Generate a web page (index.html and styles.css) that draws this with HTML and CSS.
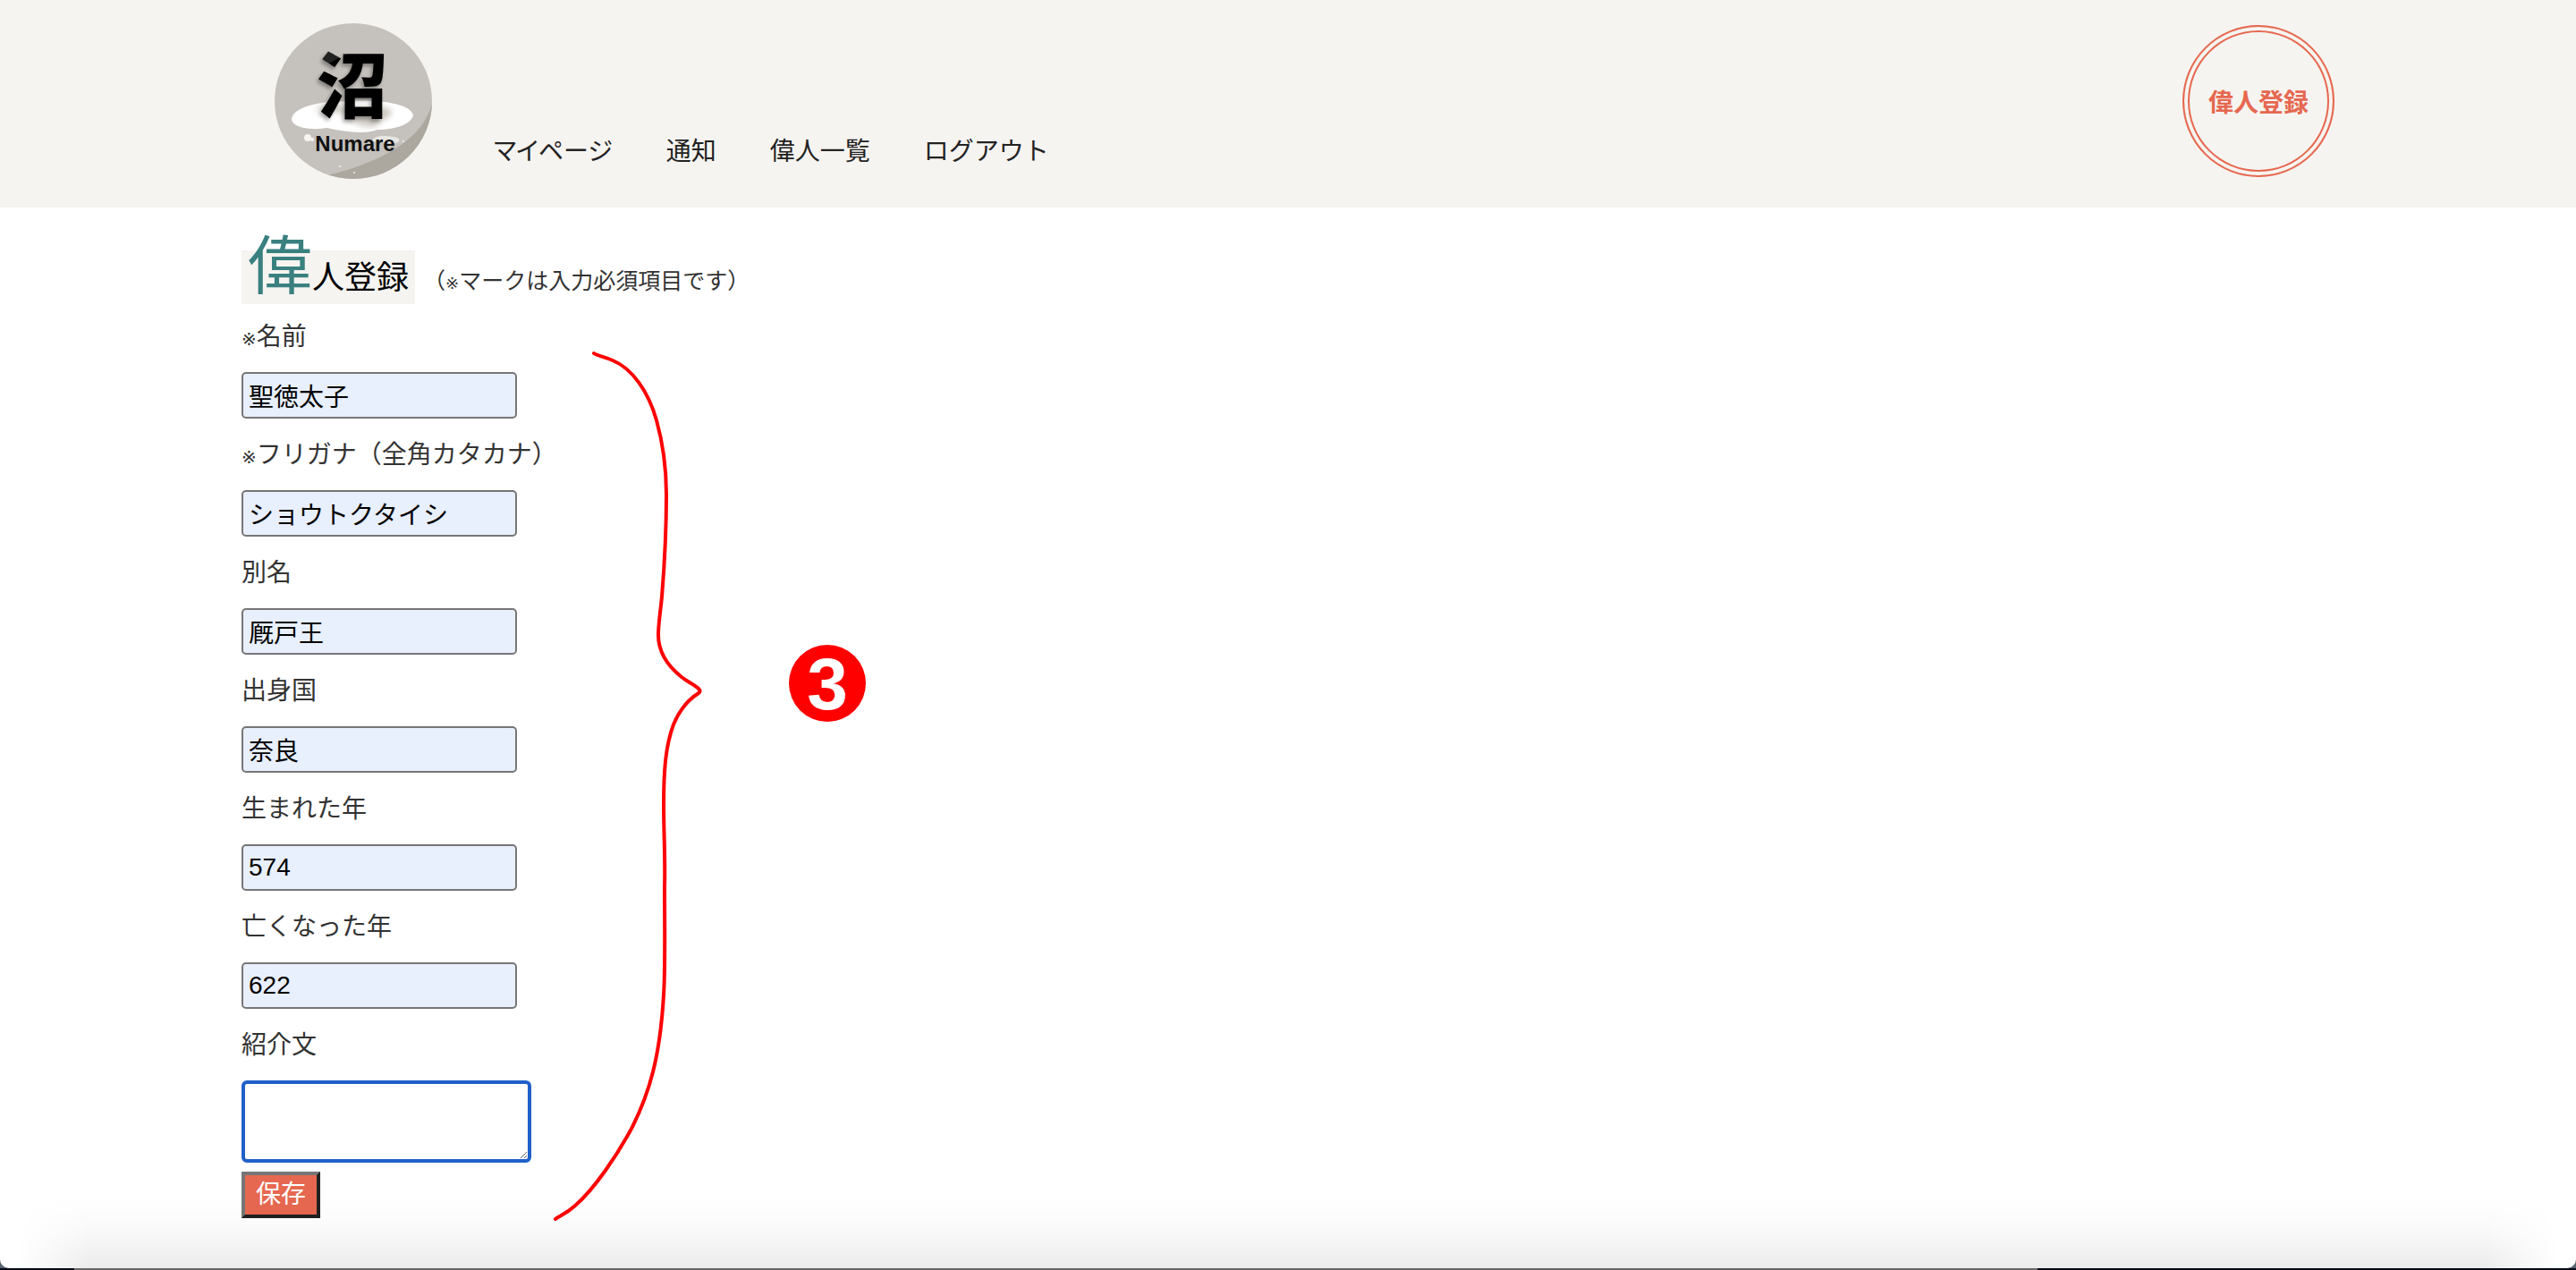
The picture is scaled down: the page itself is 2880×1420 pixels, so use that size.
FILE: index.html
```html
<!DOCTYPE html>
<html lang="ja">
<head>
<meta charset="utf-8">
<title>偉人登録 | Numare</title>
<link rel="stylesheet" href="styles.css">
</head>
<body>
<div class="window">
  <header class="header">
    <div class="container header-inner">
      <a class="logo" href="#" aria-label="Numare">
        <svg viewBox="0 0 178 176" width="178" height="176">
          <defs>
            <clipPath id="disc"><ellipse cx="89" cy="87" rx="88" ry="87"/></clipPath>
            <filter id="shade" x="-20%" y="-20%" width="140%" height="140%"><feDropShadow dx="-2" dy="3" stdDeviation="2" flood-color="#000" flood-opacity="0.35"/></filter>
            <filter id="soft"><feGaussianBlur stdDeviation="3"/></filter>
            <linearGradient id="ink" x1="0" y1="0" x2="0.35" y2="1"><stop offset="0.34" stop-color="#222"/><stop offset="0.36" stop-color="#000"/></linearGradient>
          </defs>
          <g clip-path="url(#disc)">
            <rect width="178" height="176" fill="#c5c1bc"/>
            <path d="M178 86C170 124 132 152 60 170L60 176H178Z" fill="#aca79f"/>
            <path d="M20 108C20 96 44 88 70 88C102 84 154 87 156 103C154 112 138 119 116 119C104 124 80 122 60 117C42 120 22 117 20 108Z" fill="#fff"/>
            <path d="M46 100C60 92 76 99 84 108C98 116 116 120 118 110C138 104 134 92 118 94L52 92Z" fill="#cfcac2" filter="url(#soft)"/>
            <path d="M110 132C112 124 126 126 134 127C144 128 142 135 132 134Z" fill="#e8e6e1"/>
            <circle cx="38" cy="128" r="4" fill="#f6f4f0"/>
            <circle cx="43" cy="130" r="2" fill="#f6f4f0"/>
            <circle cx="74" cy="160" r="1" fill="#f6f4f0"/>
            <circle cx="90" cy="167" r="1" fill="#f6f4f0"/>
            <circle cx="145" cy="132" r="1" fill="#f6f4f0"/>
          </g>
          <text class="logo-kanji" x="88" y="99" text-anchor="middle" fill="url(#ink)" filter="url(#shade)">沼</text>
          <text class="logo-name" x="91" y="143" text-anchor="middle">Numare</text>
        </svg>
      </a>
      <nav class="nav">
        <a href="#">マイページ</a>
        <a href="#">通知</a>
        <a href="#">偉人一覧</a>
        <a href="#">ログアウト</a>
      </nav>
      <a class="register" href="#">偉人登録</a>
    </div>
  </header>

  <main class="container main">
    <div class="title-row">
      <h1 class="title"><span class="title-initial">偉</span>人登録</h1>
      <p class="note">（<span class="mark">※</span>マークは入力必須項目です）</p>
    </div>
    <form class="form">
      <div class="field">
        <label for="name"><span class="mark">※</span>名前</label>
        <input id="name" type="text" value="聖徳太子">
      </div>
      <div class="field">
        <label for="kana"><span class="mark">※</span>フリガナ（全角カタカナ）</label>
        <input id="kana" type="text" value="ショウトクタイシ">
      </div>
      <div class="field">
        <label for="alias">別名</label>
        <input id="alias" type="text" value="厩戸王">
      </div>
      <div class="field">
        <label for="country">出身国</label>
        <input id="country" type="text" value="奈良">
      </div>
      <div class="field">
        <label for="born">生まれた年</label>
        <input id="born" type="text" value="574">
      </div>
      <div class="field">
        <label for="died">亡くなった年</label>
        <input id="died" type="text" value="622">
      </div>
      <div class="field">
        <label for="intro">紹介文</label>
        <textarea id="intro"></textarea>
      </div>
      <button class="save" type="submit">保存</button>
    </form>

    <svg class="callout" viewBox="0 0 360 980" width="360" height="980">
      <path d="M54 3C58 6 66 7 75 11C97 20 115 46 124 78C131 103 135 128 135 161C135 200 133 238 130 275C128 295 126 306 126 318C126 342 142 357 152 365C160 371 167 374 171 378Q174 381 171 383C160 390 150 401 143 418C134 442 132 470 132 508C132 540 134 570 133 600C133 640 134 690 132 720C128 790 116 830 97 868C80 900 54 938 33 956C22 966 16 967 11 971" fill="none" stroke="#f00" stroke-width="4" stroke-linecap="round" stroke-linejoin="round"/>
      <circle cx="315" cy="372" r="43" fill="#f00"/>
      <text class="callout-number" x="315" y="401" text-anchor="middle">3</text>
    </svg>
  </main>
  <div class="window-shade"></div>
</div>
<div class="desktop-edge"></div>
</body>
</html>
```
FILE: styles.css
```css
* {
  box-sizing: border-box;
}

body {
  display: flex;
  flex-direction: column;
  min-height: 100vh;
  margin: 0;
  background: #5b6470;
  color: #333;
  font-family: "Liberation Sans", "Noto Sans CJK JP", sans-serif;
  font-size: 28px;
  line-height: 40px;
}

.window {
  position: relative;
  flex: 1;
  overflow: hidden;
  border-radius: 0 0 10px 10px;
  background: #fff;
}

.container {
  width: 100%;
  max-width: 2340px;
  margin: 0 auto;
}

.header {
  background: #f6f4f0;
}

.header-inner {
  display: flex;
  align-items: flex-start;
  padding: 26px 0 30px 36px;
}

.logo {
  display: flex;
}

.logo-kanji {
  font: 900 80px "Noto Sans CJK JP", sans-serif;
}

.logo-name {
  fill: #111;
  font: bold 24px "Liberation Sans", sans-serif;
}

.nav {
  display: flex;
  align-self: flex-end;
  gap: 60px;
  margin: 0 auto 12px 68px;
  font-feature-settings: "palt";
}

.nav a {
  color: #222;
  text-decoration: none;
}

.nav a:last-child {
  font-feature-settings: normal;
}

.register {
  display: flex;
  align-items: center;
  justify-content: center;
  width: 170px;
  height: 170px;
  margin-top: 2px;
  padding-top: 6px;
  border: 2px solid #e66850;
  border-radius: 50%;
  box-shadow: inset 0 0 0 4px #f6f4f0, inset 0 0 0 6px #e66850;
  color: #e66850;
  font-weight: bold;
  text-decoration: none;
}

.main {
  position: relative;
  padding-top: 48px;
}

.title-row {
  display: flex;
  align-items: baseline;
  gap: 9px;
}

.title {
  margin: 0;
  padding: 2px 7px 0;
  background: #f6f4f0;
  color: #000;
  font-size: 36px;
  font-weight: normal;
  line-height: 58px;
}

.title-initial {
  color: #3a8080;
  font-size: 72px;
  line-height: 0;
}

.note {
  margin: 0;
  font-size: 25px;
}

.mark {
  font-family: "DejaVu Sans", sans-serif;
  font-size: 20px;
  line-height: 0;
}

.note .mark {
  font-size: 18px;
}

.form {
  display: flex;
  flex-direction: column;
  align-items: flex-start;
  gap: 20px;
  padding-top: 16px;
}

.field {
  display: flex;
  flex-direction: column;
  align-items: flex-start;
  gap: 18px;
}

.field label {
  line-height: 42px;
}

.field input {
  width: 308px;
  height: 52px;
  padding: 0 6px;
  border: 2px solid #767676;
  border-radius: 5px;
  background: #e8effd;
  color: #000;
  font: inherit;
}

.field textarea {
  width: 324px;
  height: 92px;
  padding: 4px;
  border: 4px solid #2060c8;
  border-radius: 6px;
  outline: none;
  background: #fff;
  font: inherit;
}

.save {
  width: 88px;
  height: 52px;
  margin-top: -10px;
  padding: 0;
  border: 4px solid;
  border-color: #767676 #212121 #212121 #767676;
  background: #e66850;
  color: #fff;
  font: inherit;
}

.callout {
  position: absolute;
  top: 160px;
  left: 340px;
  pointer-events: none;
}

.callout-number {
  fill: #fff;
  font: bold 82px "Liberation Sans", sans-serif;
}

.window-shade {
  position: absolute;
  right: 0;
  bottom: 0;
  left: 0;
  height: 80px;
  background: linear-gradient(rgba(0, 0, 0, 0), rgba(0, 0, 0, 0.02) 45%, rgba(0, 0, 0, 0.08));
  -webkit-mask-image: linear-gradient(to right, transparent 20px, #000 100px, #000 calc(100% - 100px), transparent calc(100% - 20px));
  mask-image: linear-gradient(to right, transparent 20px, #000 100px, #000 calc(100% - 100px), transparent calc(100% - 20px));
  pointer-events: none;
}

.desktop-edge {
  height: 2px;
  background: linear-gradient(to right, #020a14 83px, #666 83px, #666 calc(100% - 602px), #020a14 calc(100% - 602px));
}
```
